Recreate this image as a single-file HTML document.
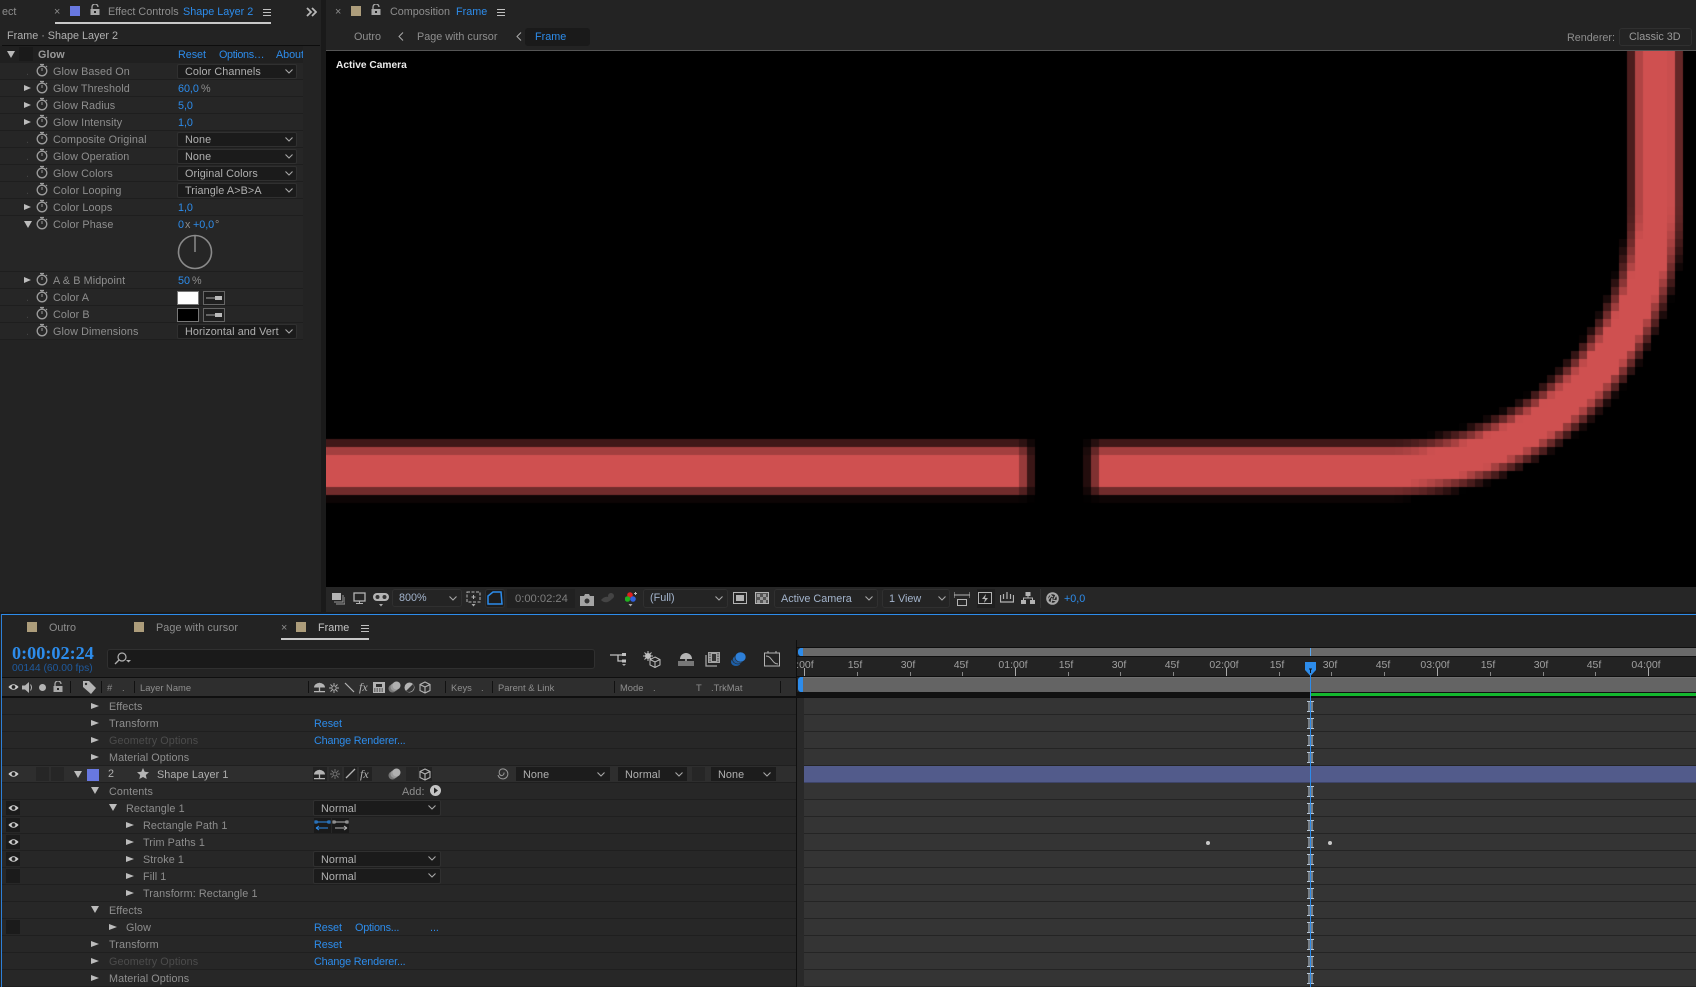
<!DOCTYPE html>
<html><head><meta charset="utf-8"><style>
html,body{margin:0;padding:0;background:#232323;width:1696px;height:987px;overflow:hidden}
body{position:relative;font:10.8px "Liberation Sans",sans-serif;color:#8e8e8e}
div,span,svg,canvas{position:absolute}
span{white-space:nowrap;line-height:16px}
.b{color:#2d8ceb}.l{color:#b0b0b0}.d{color:#4c4c4c}
.r{left:0;height:16px;background:#262626;border-bottom:1px solid #1e1e1e}
.r span{line-height:18px;top:0;letter-spacing:.1px}
.r span.b,.lr span.b{letter-spacing:-.05px}
.k{background:#1b1b1b;border:1px solid #303030;border-radius:2px;box-sizing:border-box}
.tr{width:0;height:0;border-left:8px solid #bcbcbc;border-top:3px solid transparent;border-bottom:3px solid transparent}
.r .tr{border-left-width:7px;top:5px!important}
.td{width:0;height:0;border-top:7px solid #bcbcbc;border-left:4px solid transparent;border-right:4px solid transparent}
.sw{background:#ad9d7b;width:10px;height:10px}
.hb{width:8px;height:1px;background:#c0c0c0;box-shadow:0 3px 0 #c0c0c0,0 6px 0 #c0c0c0}
.chev{width:8px;height:5px}
.sep{width:1px;height:12px;top:681px;background:#111}
.tk{width:1px;height:4px;top:672px;background:#888}
.tm{width:1px;height:8px;top:668px;background:#aaa}
.rl{top:658px;color:#a0a0a0;font-size:10.5px;line-height:14px;transform:translateX(-50%);margin-left:-2px}
.h{top:681px;font-size:9.4px;line-height:14px}
.lr{left:2px;width:794px;height:16px;background:#272727;border-bottom:1px solid #1f1f1f}
.lr>span{line-height:18px;top:0;letter-spacing:.1px}
.lr .tr{top:5px!important}
.tr2{left:804px;width:892px;height:16px;background:#343434;border-bottom:1px solid #242424}
.ib{left:1307px;width:7px;height:11px}
.ey{left:4px;width:14px;height:14px;top:1px;background:#1b1b1b}
.dt{color:#444;left:26px}
</style></head><body>
<svg width="0" height="0" style="left:0;top:0"><defs>
<symbol id="sw" viewBox="0 0 12 14"><circle cx="6" cy="8" r="4.8" fill="none" stroke="#9c9c9c" stroke-width="1.3"/><path d="M4 1.500h4M6 1.500v2M10 3l1 1" stroke="#9c9c9c" stroke-width="1.200"/><path d="M6 8V5" stroke="#9c9c9c"/></symbol>
<symbol id="ch" viewBox="0 0 8 5"><path d="M.5.5L4 4 7.500.5" fill="none" stroke="#a8a8a8" stroke-width="1.100"/></symbol>
<symbol id="ey" viewBox="0 0 14 10"><path d="M.5 5Q7-2 13.500 5Q7 12 .5 5Z" fill="#cfcfcf"/><circle cx="7" cy="5" r="2.400" fill="#222"/></symbol>
<symbol id="lk" viewBox="0 0 10 11"><path d="M2 5V3a3 3 0 0 1 6 0" fill="none" stroke="#a8a8a8" stroke-width="1.300"/><rect x="0.5" y="5" width="9" height="6" fill="#a8a8a8"/><rect x="4" y="7" width="2" height="2" fill="#232323"/></symbol>
<symbol id="ib" viewBox="0 0 7 11"><path d="M0 .5h7M0 10.500h7M2 1v9M5 1v9" fill="none" stroke="#b9c8d8" stroke-width="1"/></symbol>
<symbol id="um" viewBox="0 0 14 12"><path d="M1 6a6 5 0 0 1 12 0z" fill="#b4b4b4"/><path d="M7 1v9M1 10.500h12" stroke="#b4b4b4" stroke-width="1.400"/></symbol>
<symbol id="cb" viewBox="0 0 12 13"><path d="M6 1l5 2.500v6L6 12 1 9.500v-6zM1 3.500L6 6l5-2.500M6 6v6" fill="none" stroke="#b4b4b4" stroke-width="1.100"/></symbol>
</defs></svg>

<!-- Left panel -->
<div style="left:321px;top:0;width:5px;height:614px;background:#1a1a1a"></div>
<span style="left:2px;top:4px">ect</span>
<span style="left:54px;top:4px">×</span>
<div style="left:70px;top:6px;width:10px;height:10px;background:#6878e0"></div>
<svg width="10" height="11" style="left:90px;top:4px"><use href="#lk"/></svg>
<span style="left:108px;top:4px">Effect Controls</span><span class="b" style="left:183px;top:4px">Shape Layer 2</span>
<div class="hb" style="left:263px;top:9px"></div>
<div style="left:55px;top:22px;width:216px;height:2px;background:#c8c8c8"></div>
<svg width="11" height="10" style="left:306px;top:7px"><path d="M1 1l4 4-4 4M6 1l4 4-4 4" fill="none" stroke="#b8b8b8" stroke-width="1.800"/></svg>
<span class="l" style="left:7px;top:28px">Frame · Shape Layer 2</span>
<div style="left:2px;top:45px;width:318px;height:1px;background:#0d0d0d"></div>

<div class="r" style="top:46px;width:303px;background:#202020;border:0;height:17px">
<div class="td" style="left:7px;top:5px;border-top-color:#b8b8b8"></div>
<div style="left:19px;top:1px;width:14px;height:14px;background:#1a1a1a"></div>
<span class="l" style="left:38px;font-weight:bold;color:#9a9a9a">Glow</span>
<span class="b" style="left:178px">Reset</span><span class="b" style="left:219px;letter-spacing:-.35px">Options…</span><span class="b" style="left:276px;width:27px;overflow:hidden">About</span></div>

<div class="r" style="top:63px;width:303px"><span class="dt">.</span><svg width="12" height="14" style="left:36px;top:0"><use href="#sw"/></svg><span style="left:53px">Glow Based On</span><div class="k" style="left:177px;top:1px;width:120px;height:15px"></div><span class="l" style="left:185px">Color Channels</span><svg class="chev" style="left:285px;top:6px"><use href="#ch"/></svg></div>
<div class="r" style="top:80px;width:303px"><div class="tr" style="left:24px;top:4px"></div><svg width="12" height="14" style="left:36px;top:0"><use href="#sw"/></svg><span style="left:53px">Glow Threshold</span><span class="b" style="left:178px">60,0</span><span style="left:201px"> %</span></div>
<div class="r" style="top:97px;width:303px"><div class="tr" style="left:24px;top:4px"></div><svg width="12" height="14" style="left:36px;top:0"><use href="#sw"/></svg><span style="left:53px">Glow Radius</span><span class="b" style="left:178px">5,0</span></div>
<div class="r" style="top:114px;width:303px"><div class="tr" style="left:24px;top:4px"></div><svg width="12" height="14" style="left:36px;top:0"><use href="#sw"/></svg><span style="left:53px">Glow Intensity</span><span class="b" style="left:178px">1,0</span></div>
<div class="r" style="top:131px;width:303px"><span class="dt">.</span><svg width="12" height="14" style="left:36px;top:0"><use href="#sw"/></svg><span style="left:53px">Composite Original</span><div class="k" style="left:177px;top:1px;width:120px;height:15px"></div><span class="l" style="left:185px">None</span><svg class="chev" style="left:285px;top:6px"><use href="#ch"/></svg></div>
<div class="r" style="top:148px;width:303px"><span class="dt">.</span><svg width="12" height="14" style="left:36px;top:0"><use href="#sw"/></svg><span style="left:53px">Glow Operation</span><div class="k" style="left:177px;top:1px;width:120px;height:15px"></div><span class="l" style="left:185px">None</span><svg class="chev" style="left:285px;top:6px"><use href="#ch"/></svg></div>
<div class="r" style="top:165px;width:303px"><span class="dt">.</span><svg width="12" height="14" style="left:36px;top:0"><use href="#sw"/></svg><span style="left:53px">Glow Colors</span><div class="k" style="left:177px;top:1px;width:120px;height:15px"></div><span class="l" style="left:185px">Original Colors</span><svg class="chev" style="left:285px;top:6px"><use href="#ch"/></svg></div>
<div class="r" style="top:182px;width:303px"><span class="dt">.</span><svg width="12" height="14" style="left:36px;top:0"><use href="#sw"/></svg><span style="left:53px">Color Looping</span><div class="k" style="left:177px;top:1px;width:120px;height:15px"></div><span class="l" style="left:185px">Triangle A&gt;B&gt;A</span><svg class="chev" style="left:285px;top:6px"><use href="#ch"/></svg></div>
<div class="r" style="top:199px;width:303px"><div class="tr" style="left:24px;top:4px"></div><svg width="12" height="14" style="left:36px;top:0"><use href="#sw"/></svg><span style="left:53px">Color Loops</span><span class="b" style="left:178px">1,0</span></div>
<div class="r" style="top:216px;width:303px;height:55px"><div class="td" style="left:24px;top:5px"></div><svg width="12" height="14" style="left:36px;top:0"><use href="#sw"/></svg><span style="left:53px">Color Phase</span><span class="b" style="left:178px">0</span><span style="left:185px">x</span><span class="b" style="left:193px">+0,0</span><span style="left:215px">°</span>
<svg width="38" height="38" style="left:176px;top:17px"><circle cx="19" cy="19" r="16.500" fill="none" stroke="#8a8a8a" stroke-width="1.600"/><path d="M19 3v16" stroke="#8a8a8a" stroke-width="1.500"/></svg></div>
<div class="r" style="top:272px;width:303px"><div class="tr" style="left:24px;top:4px"></div><svg width="12" height="14" style="left:36px;top:0"><use href="#sw"/></svg><span style="left:53px">A &amp; B Midpoint</span><span class="b" style="left:178px">50</span><span style="left:192px">%</span></div>
<div class="r" style="top:289px;width:303px"><span class="dt">.</span><svg width="12" height="14" style="left:36px;top:0"><use href="#sw"/></svg><span style="left:53px">Color A</span><div style="left:177px;top:2px;width:22px;height:14px;box-sizing:border-box;border:1px solid #777;background:#fff"></div><svg width="22" height="14" style="left:203px;top:2px"><rect x=".5" y=".5" width="21" height="13" fill="#1f1f1f" stroke="#666"/><path d="M3 7h9" stroke="#aaa"/><path d="M12 5h7v4h-7z" fill="#bbb"/></svg></div>
<div class="r" style="top:306px;width:303px"><span class="dt">.</span><svg width="12" height="14" style="left:36px;top:0"><use href="#sw"/></svg><span style="left:53px">Color B</span><div style="left:177px;top:2px;width:22px;height:14px;box-sizing:border-box;border:1px solid #777;background:#000"></div><svg width="22" height="14" style="left:203px;top:2px"><rect x=".5" y=".5" width="21" height="13" fill="#1f1f1f" stroke="#666"/><path d="M3 7h9" stroke="#aaa"/><path d="M12 5h7v4h-7z" fill="#bbb"/></svg></div>
<div class="r" style="top:323px;width:303px"><span class="dt">.</span><svg width="12" height="14" style="left:36px;top:0"><use href="#sw"/></svg><span style="left:53px">Glow Dimensions</span><div class="k" style="left:177px;top:1px;width:120px;height:15px"></div><span class="l" style="left:185px">Horizontal and Vert</span><svg class="chev" style="left:285px;top:6px"><use href="#ch"/></svg></div>

<!-- Composition panel -->
<span style="left:335px;top:4px">×</span>
<div class="sw" style="left:351px;top:6px"></div>
<svg width="10" height="11" style="left:371px;top:4px"><use href="#lk"/></svg>
<span style="left:390px;top:4px">Composition</span><span class="b" style="left:456px;top:4px">Frame</span>
<div class="hb" style="left:497px;top:9px"></div>
<span style="left:354px;top:29px">Outro</span>
<svg width="6" height="9" style="left:398px;top:32px"><path d="M5 .5L1 4.500 5 8.500" fill="none" stroke="#aaa"/></svg>
<span style="left:417px;top:29px">Page with cursor</span>
<svg width="6" height="9" style="left:516px;top:32px"><path d="M5 .5L1 4.500 5 8.500" fill="none" stroke="#aaa"/></svg>
<div style="left:525px;top:28px;width:65px;height:18px;background:#1a1a1a;border-radius:3px"></div>
<span class="b" style="left:535px;top:29px">Frame</span>
<span style="left:1567px;top:30px">Renderer:</span>
<div class="k" style="left:1619px;top:28px;width:73px;height:18px;background:#242424;border-radius:3px"></div>
<span style="left:1629px;top:29px;color:#9a9a9a">Classic 3D</span>
<div style="left:326px;top:50px;width:1370px;height:1px;background:#555"></div>

<div style="left:326px;top:51px;width:1370px;height:536px;background:#000;overflow:hidden">
<svg width="1370" height="536" style="left:0;top:0"><path d="M0 418H693M791 418H1065A265 265 0 0 0 1330 153V0" fill="none" stroke="#6a2a2a" stroke-width="52"/><path d="M0 418H693M791 418H1065A265 265 0 0 0 1330 153V0" fill="none" stroke="#cf5050" stroke-width="30"/></svg>
<canvas id="v" width="1370" height="536" style="left:0;top:0"></canvas>
</div>
<script>
(function(){var c=document.getElementById('v').getContext('2d'),C=function(v){return v<0?0:v>1?1:v};
c.fillStyle='#000';c.fillRect(0,0,1370,536);
for(var ay=47;ay<587;ay+=8)for(var ax=323;ax<1696;ax+=8){var x=ax+4,y=ay+4,d;
if(x<=1391)d=Math.abs(y-469);else if(y<=204)d=Math.abs(x-1656);else d=Math.abs(Math.hypot(x-1391,y-204)-265);
var I=C((31-d)/16.5);if(I<=0)continue;
if(x<1060){if(x>1003)I*=C((33-(x-1003))/18)}else if(x<1117){I*=C((33-(1117-x))/18)}
if(I<=0)continue;
c.fillStyle='rgb('+Math.round(I*207)+','+Math.round(I*80)+','+Math.round(I*80)+')';c.fillRect(ax-326,ay-51,8,8)}})();
</script>
<span style="left:336px;top:58px;color:#ececec;font-weight:bold;font-size:10.2px">Active Camera</span>

<!-- Viewer toolbar -->
<div style="left:326px;top:587px;width:1370px;height:25px;background:#262626"></div>
<div style="left:0;top:612px;width:1696px;height:2px;background:#1a1a1a"></div>
<svg width="14" height="13" style="left:331px;top:592px"><rect x="1" y="1" width="9" height="7" fill="#b4b4b4"/><path d="M12 3v7H3M14 5v7H5" fill="none" stroke="#9a9a9a"/></svg>
<svg width="13" height="13" style="left:353px;top:592px"><rect x="1" y="1" width="11" height="8" fill="none" stroke="#b4b4b4" stroke-width="1.300"/><path d="M3 11.500h7M6.500 9v2" stroke="#b4b4b4"/></svg>
<svg width="16" height="15" style="left:373px;top:592px"><rect x="0" y="1" width="16" height="8" rx="4" fill="#b4b4b4"/><circle cx="4.500" cy="5" r="2" fill="#333"/><circle cx="11.500" cy="5" r="2" fill="#333"/><path d="M6 12h4l-2 2.500z" fill="#aaa"/></svg>
<div class="k" style="left:392px;top:589px;width:70px;height:18px;background:#242424;border-radius:3px"></div>
<span style="left:399px;top:590px;color:#a3b4cc">800%</span>
<svg class="chev" style="left:449px;top:596px"><use href="#ch"/></svg>
<svg width="15" height="16" style="left:466px;top:591px"><path d="M1 1h13v10H1z" fill="none" stroke="#b4b4b4" stroke-dasharray="3 1.500"/><path d="M7.500 4v4M5.500 6h4" stroke="#b4b4b4"/><path d="M5.500 13h4l-2 2.500z" fill="#aaa"/></svg>
<div class="k" style="left:485px;top:589px;width:20px;height:19px;background:#1d1d1d;border-radius:3px"></div>
<svg width="16" height="14" style="left:487px;top:591px"><path d="M1 13V5l5-4h8l1 12z" fill="none" stroke="#2d8ceb" stroke-width="1.500"/></svg>
<div style="left:507px;top:589px;width:68px;height:19px;background:#212121"></div>
<span style="left:515px;top:591px;color:#7e7e7e;font-size:11.200px">0:00:02:24</span>
<svg width="14" height="12" style="left:580px;top:594px"><path d="M0 2h4l1-2h4l1 2h4v10H0z" fill="#a4a4a4"/><circle cx="7" cy="7" r="2.500" fill="#333"/></svg>
<svg width="14" height="13" style="left:601px;top:592px"><path d="M0 8Q5 2 11 7Q5 13 0 8Z" fill="#444"/><circle cx="10" cy="4" r="3" fill="#444"/></svg>
<svg width="12" height="16" style="left:625px;top:591px"><circle cx="5" cy="4" r="2.800" fill="#e02020"/><circle cx="2.500" cy="8" r="2.800" fill="#20b020"/><circle cx="8" cy="8" r="2.800" fill="#3060e0"/><path d="M9 2.500h3M10.500 1v3" stroke="#bbb"/><path d="M3.500 13h4l-2 2.500z" fill="#aaa"/></svg>
<div class="k" style="left:643px;top:589px;width:85px;height:19px;background:#242424;border-radius:3px"></div>
<span style="left:650px;top:590px;color:#a3b4cc">(Full)</span>
<svg class="chev" style="left:715px;top:596px"><use href="#ch"/></svg>
<svg width="14" height="12" style="left:733px;top:592px"><rect x=".5" y=".5" width="13" height="11" fill="none" stroke="#b4b4b4"/><rect x="3" y="3" width="8" height="6" fill="#b4b4b4"/></svg>
<svg width="14" height="12" style="left:755px;top:592px"><rect x=".5" y=".5" width="13" height="11" fill="#555" stroke="#b4b4b4"/><path d="M2 2h3v3H2zM8 2h3v3H8zM5 5h3v3H5zM11 5h2v3h-2zM2 8h3v3H2zM8 8h3v3H8z" fill="#999"/></svg>
<div class="k" style="left:774px;top:589px;width:104px;height:19px;background:#242424;border-radius:3px"></div>
<span style="left:781px;top:591px;color:#a3b4cc">Active Camera</span>
<svg class="chev" style="left:865px;top:596px"><use href="#ch"/></svg>
<div class="k" style="left:882px;top:589px;width:68px;height:19px;background:#242424;border-radius:3px"></div>
<span style="left:889px;top:591px;color:#a3b4cc">1 View</span>
<svg class="chev" style="left:938px;top:596px"><use href="#ch"/></svg>
<svg width="16" height="14" style="left:954px;top:592px"><path d="M0 3h16M0 0v6M16 0v6" stroke="#b4b4b4"/><rect x="3.500" y="7.500" width="9" height="6" fill="none" stroke="#b4b4b4"/></svg>
<div style="left:977px;top:589px;width:18px;height:19px;background:#1f1f1f"></div>
<svg width="15" height="13" style="left:978px;top:592px"><rect x=".5" y=".5" width="13" height="11" fill="none" stroke="#b4b4b4"/><path d="M8 2L4 7h3l-1 4 4-5H7z" fill="#b4b4b4"/></svg>
<svg width="14" height="12" style="left:1000px;top:592px"><path d="M.5 3v7h13V3M3.500 2v5M7 0v7M10.500 2v5" fill="none" stroke="#b4b4b4" stroke-width="1.200"/></svg>
<svg width="14" height="12" style="left:1021px;top:592px"><rect x="4.500" y="0" width="5" height="4" fill="#b4b4b4"/><rect x="0" y="8" width="5" height="4" fill="#b4b4b4"/><rect x="9" y="8" width="5" height="4" fill="#b4b4b4"/><path d="M7 4v2M2.500 8V6h9v2" fill="none" stroke="#b4b4b4"/></svg>
<div style="left:1040px;top:589px;width:1px;height:19px;background:#333"></div>
<svg width="13" height="13" style="left:1046px;top:592px"><circle cx="6.500" cy="6.500" r="5.300" fill="none" stroke="#a8a8a8" stroke-width="2"/><path d="M3 2l4 3M10 3L8 7M11 9L6 8M5 11l1-5M2 8l3-4" stroke="#a8a8a8" stroke-width="1.200"/></svg>
<span class="b" style="left:1064px;top:591px">+0,0</span>

<!-- Timeline panel -->
<div style="left:1px;top:614px;width:1695px;height:1px;background:#2d8ceb"></div>
<div style="left:1px;top:614px;width:1px;height:373px;background:#2d80d8"></div>
<div class="sw" style="left:27px;top:622px"></div><span style="left:49px;top:620px">Outro</span>
<div class="sw" style="left:134px;top:622px"></div><span style="left:156px;top:620px;letter-spacing:.1px">Page with cursor</span>
<span style="left:281px;top:620px">×</span>
<div class="sw" style="left:296px;top:622px"></div><span style="left:318px;top:620px;color:#c4c4c4">Frame</span>
<div class="hb" style="left:361px;top:625px"></div>
<div style="left:281px;top:638px;width:88px;height:2px;background:#c8c8c8"></div>
<span class="b" style="left:12px;top:645px;font:bold 18.2px/16px 'Liberation Serif',serif">0:00:02:24</span>
<span style="left:12px;top:661px;color:#1f5a9e;font-size:10.300px">00144 (60.00 fps)</span>
<div class="k" style="left:107px;top:649px;width:488px;height:20px;background:#1a1a1a;border-radius:3px"></div>
<svg width="18" height="14" style="left:113px;top:652px"><circle cx="9" cy="5" r="4" fill="none" stroke="#b0b0b0" stroke-width="1.200"/><path d="M6 8l-4 4" stroke="#b0b0b0" stroke-width="1.300"/><path d="M13 8h5l-2.500 2.500z" fill="#b0b0b0"/></svg>
<svg width="18" height="15" style="left:610px;top:652px"><path d="M0 3h8M8 3h5M8 3v6h5" fill="none" stroke="#c0c0c0" stroke-width="1.300"/><rect x="12" y="1" width="4" height="3" fill="#c0c0c0"/><rect x="12" y="7.500" width="4" height="3" fill="#c0c0c0"/><path d="M12 12h4l-2 2z" fill="#aaa"/></svg>
<svg width="18" height="17" style="left:643px;top:651px"><circle cx="5" cy="5" r="3" fill="#c0c0c0"/><path d="M5 0v10M0 5h10M1.500 1.500l7 7M8.500 1.500l-7 7" stroke="#c0c0c0"/><path d="M12 6l5 2.500v5.500l-5 2.500-5-2.500V8.500zM7 8.500l5 2.500 5-2.500M12 11v5.500" fill="#232323" stroke="#c0c0c0"/></svg>
<svg width="16" height="14" style="left:678px;top:652px"><path d="M2 7a6 6 0 0 1 12 0z" fill="#b4b4b4"/><path d="M8 1v8" stroke="#b4b4b4" stroke-width="1.500"/><rect x="0" y="9" width="16" height="5" fill="#777"/></svg>
<svg width="15" height="15" style="left:705px;top:652px"><rect x="3" y="0" width="12" height="11" fill="#a4a4a4"/><path d="M5 1v9M13 1v9" stroke="#333" stroke-dasharray="1.500 1"/><rect x="7" y="2" width="4" height="7" fill="#333"/><path d="M1 3v11h11" fill="none" stroke="#a4a4a4" stroke-width="1.300"/></svg>
<svg width="15" height="14" style="left:731px;top:652px"><ellipse cx="5" cy="10" rx="5" ry="4" fill="#1c5fa8"/><ellipse cx="7" cy="7.500" rx="5.500" ry="4.500" fill="#235ea0" stroke="#232323" stroke-width=".6"/><ellipse cx="9.500" cy="5" rx="5.500" ry="5" fill="#2d7fd8" stroke="#232323" stroke-width=".6"/></svg>
<svg width="16" height="16" style="left:764px;top:651px"><rect x=".5" y="2" width="15" height="13" fill="none" stroke="#b4b4b4"/><path d="M2 5c6 0 6 8 12 8M4 0v2M12 0v2" fill="none" stroke="#b4b4b4"/></svg>

<!-- column header -->
<div style="left:2px;top:677px;width:794px;height:1px;background:#0f0f0f"></div>
<div style="left:2px;top:678px;width:794px;height:18px;background:#2e2e2e"></div>
<div style="left:2px;top:696px;width:794px;height:2px;background:#0f0f0f"></div>
<svg width="11" height="8" style="left:8px;top:683px"><use href="#ey"/></svg>
<svg width="11" height="11" style="left:22px;top:682px"><path d="M0 3.500h3L7 0v11L3 7.500H0z" fill="#b4b4b4"/><path d="M8.500 2.500q2 3 0 6" fill="none" stroke="#b4b4b4"/></svg>
<div style="left:39px;top:684px;width:7px;height:7px;border-radius:50%;background:#b4b4b4"></div>
<svg width="10" height="11" style="left:53px;top:681px"><use href="#lk"/></svg>
<div class="sep" style="left:70px"></div>
<svg width="13" height="13" style="left:83px;top:681px"><path d="M0 0h6l7 7-5 6-8-7z" fill="#b4b4b4"/><circle cx="3" cy="3" r="1.200" fill="#2e2e2e"/></svg>
<div class="sep" style="left:101px"></div>
<span class="h" style="left:107px">#</span><span class="h" style="left:122px">.</span>
<div class="sep" style="left:134px"></div>
<span class="h" style="left:140px">Layer Name</span>
<div class="sep" style="left:308px"></div>
<svg width="13" height="11" style="left:313px;top:682px"><use href="#um"/></svg>
<svg width="10" height="10" style="left:329px;top:683px"><circle cx="5" cy="5" r="2.200" fill="none" stroke="#b4b4b4"/><path d="M5 0v2M5 8v2M0 5h2M8 5h2M1.500 1.500L3 3M7 7l1.500 1.500M8.500 1.500L7 3M3 7L1.500 8.500" stroke="#b4b4b4" stroke-width=".9"/></svg>
<svg width="11" height="11" style="left:344px;top:682px"><path d="M1 1l9 9" stroke="#b4b4b4" stroke-width="1.200"/></svg>
<span style="left:359px;top:680px;font:italic 12px/14px 'Liberation Serif',serif;color:#b4b4b4">fx</span>
<svg width="13" height="11" style="left:373px;top:682px"><rect width="12" height="11" fill="#b4b4b4"/><rect x="3" y="2" width="6" height="3" fill="#2e2e2e"/><path d="M1 7h10M1 9h10" stroke="#2e2e2e" stroke-dasharray="1.500 1"/></svg>
<svg width="13" height="12" style="left:388px;top:681px"><circle cx="4.500" cy="7.500" r="4" fill="#777"/><circle cx="6.500" cy="6" r="4" fill="#999"/><circle cx="8.500" cy="4.500" r="4" fill="#b0b0b0"/></svg>
<svg width="11" height="11" style="left:404px;top:682px"><circle cx="5.500" cy="5.500" r="5" fill="#b4b4b4"/><path d="M9 2A5 5 0 0 1 2 9z" fill="#333"/></svg>
<svg width="12" height="13" style="left:419px;top:681px"><use href="#cb"/></svg>
<div class="sep" style="left:445px"></div>
<span class="h" style="left:451px">Keys</span><span class="h" style="left:481px">.</span>
<div class="sep" style="left:492px"></div>
<span class="h" style="left:498px">Parent &amp; Link</span>
<div class="sep" style="left:614px"></div>
<span class="h" style="left:620px">Mode</span><span class="h" style="left:653px">.</span>
<span class="h" style="left:696px">T</span><span class="h" style="left:711px">.TrkMat</span>
<div class="sep" style="left:780px"></div>

<!-- layer list -->
<div class="lr" style="top:698px"><div class="tr" style="left:89px;top:4px"></div><span style="left:107px">Effects</span></div>
<div class="lr" style="top:715px"><div class="tr" style="left:89px;top:4px"></div><span style="left:107px">Transform</span><span class="b" style="left:312px">Reset</span></div>
<div class="lr" style="top:732px"><div class="tr" style="left:89px;top:4px"></div><span class="d" style="left:107px">Geometry Options</span><span class="b" style="left:312px;letter-spacing:-.15px">Change Renderer...</span></div>
<div class="lr" style="top:749px"><div class="tr" style="left:89px;top:4px"></div><span style="left:107px">Material Options</span></div>
<div class="lr" style="top:766px;background:#2e2e2e">
<div class="ey" style="background:none"></div><svg width="11" height="8" style="left:6px;top:4px"><use href="#ey"/></svg>
<div style="left:34px;top:1px;width:13px;height:14px;background:#262626"></div><div style="left:49px;top:1px;width:13px;height:14px;background:#262626"></div>
<div class="td" style="left:72px;top:5px"></div>
<div style="left:85px;top:3px;width:12px;height:12px;background:#6878e0"></div>
<span class="l" style="left:106px;top:-1px">2</span>
<svg width="12" height="11" style="left:135px;top:2px"><path d="M6 0l1.700 3.800 4.300.4-3.200 2.800.9 4L6 9 2.300 11l.9-4L0 4.200l4.300-.4z" fill="#b4b4b4"/></svg>
<span class="l" style="left:155px">Shape Layer 1</span>
<div style="left:311px;top:1px;width:14px;height:14px;background:#222"></div><svg width="13" height="11" style="left:311px;top:3px"><use href="#um"/></svg>
<div style="left:327px;top:1px;width:13px;height:14px;background:#282828"></div><svg width="10" height="10" style="left:328px;top:3px"><circle cx="5" cy="5" r="2" fill="none" stroke="#777"/><path d="M5 0v2M5 8v2M0 5h2M8 5h2M1.500 1.500L3 3M7 7l1.500 1.500M8.500 1.500L7 3M3 7L1.500 8.500" stroke="#777" stroke-width=".9"/></svg>
<div style="left:342px;top:1px;width:13px;height:14px;background:#222"></div><svg width="11" height="11" style="left:343px;top:2px"><path d="M1 10l9-9" stroke="#b4b4b4" stroke-width="1.300"/></svg>
<div style="left:357px;top:1px;width:13px;height:14px;background:#222"></div><span style="left:358px;font:italic 12px/16px 'Liberation Serif',serif;color:#b4b4b4">fx</span>
<svg width="13" height="12" style="left:386px;top:2px"><circle cx="4.500" cy="7.500" r="4" fill="#777"/><circle cx="6.500" cy="6" r="4" fill="#999"/><circle cx="8.500" cy="4.500" r="4" fill="#b0b0b0"/></svg>
<div style="left:404px;top:1px;width:12px;height:14px;background:#262626"></div>
<div style="left:417px;top:1px;width:13px;height:14px;background:#222"></div><svg width="12" height="13" style="left:417px;top:2px"><use href="#cb"/></svg>
<svg width="12" height="12" style="left:495px;top:2px"><path d="M1 7a5 5 0 1 0 4-6 3.500 3.500 0 0 0-1 6.500 2.500 2.500 0 0 0 3-3" fill="none" stroke="#999"/></svg>
<div style="left:514px;top:1px;width:94px;height:14px;background:#1c1c1c"></div><span class="l" style="left:521px">None</span><svg class="chev" style="left:595px;top:6px"><use href="#ch"/></svg>
<div style="left:616px;top:1px;width:69px;height:14px;background:#1c1c1c"></div><span class="l" style="left:623px">Normal</span><svg class="chev" style="left:673px;top:6px"><use href="#ch"/></svg>
<div style="left:690px;top:1px;width:13px;height:14px;background:#262626"></div>
<div style="left:709px;top:1px;width:65px;height:14px;background:#1c1c1c"></div><span class="l" style="left:716px">None</span><svg class="chev" style="left:761px;top:6px"><use href="#ch"/></svg>
</div>
<div class="lr" style="top:783px"><div class="td" style="left:89px;top:4px"></div><span style="left:107px">Contents</span><span style="left:400px">Add:</span><svg width="11" height="11" style="left:428px;top:2px"><circle cx="5.500" cy="5.500" r="5.500" fill="#c4c4c4"/><path d="M4 2.500L8 5.500 4 8.500z" fill="#272727"/></svg></div>
<div class="lr" style="top:800px"><div class="ey"></div><svg width="11" height="8" style="left:6px;top:4px"><use href="#ey"/></svg><div class="td" style="left:107px;top:4px"></div><span style="left:124px">Rectangle 1</span><div class="k" style="left:311px;top:0;width:128px;height:16px"></div><span class="l" style="left:319px">Normal</span><svg class="chev" style="left:426px;top:5px"><use href="#ch"/></svg></div>
<div class="lr" style="top:817px"><div class="ey"></div><svg width="11" height="8" style="left:6px;top:4px"><use href="#ey"/></svg><div class="tr" style="left:124px;top:4px"></div><span style="left:141px">Rectangle Path 1</span>
<svg width="17" height="15" style="left:312px;top:1px"><rect width="17" height="15" fill="#1a1a1a"/><path d="M3 4h11M2 10h12M2 10l3-2M2 10l3 2" fill="none" stroke="#2d8ceb"/><rect x="1" y="3" width="2" height="2" fill="none" stroke="#2d8ceb"/><rect x="14" y="3" width="2" height="2" fill="none" stroke="#2d8ceb"/></svg>
<svg width="17" height="15" style="left:330px;top:1px"><rect width="17" height="15" fill="#1a1a1a"/><path d="M3 4h11M3 10h12M15 10l-3-2M15 10l-3 2" fill="none" stroke="#b4b4b4"/><rect x="1" y="3" width="2" height="2" fill="none" stroke="#b4b4b4"/><rect x="14" y="3" width="2" height="2" fill="none" stroke="#b4b4b4"/></svg></div>
<div class="lr" style="top:834px"><div class="ey"></div><svg width="11" height="8" style="left:6px;top:4px"><use href="#ey"/></svg><div class="tr" style="left:124px;top:4px"></div><span style="left:141px">Trim Paths 1</span></div>
<div class="lr" style="top:851px"><div class="ey"></div><svg width="11" height="8" style="left:6px;top:4px"><use href="#ey"/></svg><div class="tr" style="left:124px;top:4px"></div><span style="left:141px">Stroke 1</span><div class="k" style="left:311px;top:0;width:128px;height:16px"></div><span class="l" style="left:319px">Normal</span><svg class="chev" style="left:426px;top:5px"><use href="#ch"/></svg></div>
<div class="lr" style="top:868px"><div class="ey"></div><div class="tr" style="left:124px;top:4px"></div><span style="left:141px">Fill 1</span><div class="k" style="left:311px;top:0;width:128px;height:16px"></div><span class="l" style="left:319px">Normal</span><svg class="chev" style="left:426px;top:5px"><use href="#ch"/></svg></div>
<div class="lr" style="top:885px"><div class="tr" style="left:124px;top:4px"></div><span style="left:141px">Transform: Rectangle 1</span></div>
<div class="lr" style="top:902px"><div class="td" style="left:89px;top:4px"></div><span style="left:107px">Effects</span></div>
<div class="lr" style="top:919px"><div class="ey"></div><div class="tr" style="left:107px;top:4px"></div><span style="left:124px">Glow</span><span class="b" style="left:312px">Reset</span><span class="b" style="left:353px;letter-spacing:-.2px">Options...</span><span class="b" style="left:428px;top:0">...</span></div>
<div class="lr" style="top:936px"><div class="tr" style="left:89px;top:4px"></div><span style="left:107px">Transform</span><span class="b" style="left:312px">Reset</span></div>
<div class="lr" style="top:953px"><div class="tr" style="left:89px;top:4px"></div><span class="d" style="left:107px">Geometry Options</span><span class="b" style="left:312px;letter-spacing:-.15px">Change Renderer...</span></div>
<div class="lr" style="top:970px"><div class="tr" style="left:89px;top:4px"></div><span style="left:107px">Material Options</span></div>
<div style="left:796px;top:640px;width:1px;height:347px;background:#0f0f0f"></div>
<div style="left:797px;top:698px;width:7px;height:289px;background:#292929"></div>

<!-- Ruler -->
<div style="left:797px;top:647px;width:899px;height:1px;background:#0f0f0f"></div>
<div style="left:800px;top:648px;width:896px;height:8px;background:#6a6a6a"></div>
<div style="left:798px;top:648px;width:5px;height:8px;background:#2d8ceb;border-radius:3px 0 0 3px"></div>
<div style="left:797px;top:656px;width:899px;height:1px;background:#0f0f0f"></div>
<div style="left:797px;top:676px;width:899px;height:1px;background:#0f0f0f"></div>
<div style="left:800px;top:677px;width:896px;height:15px;background:#646464;border-top:1px solid #707070;box-sizing:border-box"></div>
<div style="left:798px;top:677px;width:5px;height:15px;background:#2d8ceb;border-radius:3px 0 0 3px"></div>
<div style="left:797px;top:692px;width:899px;height:5px;background:#111"></div>
<div style="left:1310px;top:693px;width:386px;height:3px;background:#14b82e"></div>
<div style="left:797px;top:697px;width:899px;height:1px;background:#0f0f0f"></div>
<div style="left:797px;top:650px;width:40px;height:24px;overflow:hidden"><span class="rl" style="left:7px;top:8px">0:00f</span></div>
<div class="tm" style="left:804px"></div>
<span class="rl" style="left:857px">15f</span><div class="tk" style="left:857px"></div>
<span class="rl" style="left:910px">30f</span><div class="tk" style="left:910px"></div>
<span class="rl" style="left:963px">45f</span><div class="tk" style="left:962px"></div>
<span class="rl" style="left:1015px">01:00f</span><div class="tm" style="left:1015px"></div>
<span class="rl" style="left:1068px">15f</span><div class="tk" style="left:1068px"></div>
<span class="rl" style="left:1121px">30f</span><div class="tk" style="left:1120px"></div>
<span class="rl" style="left:1174px">45f</span><div class="tk" style="left:1173px"></div>
<span class="rl" style="left:1226px">02:00f</span><div class="tm" style="left:1226px"></div>
<span class="rl" style="left:1279px">15f</span><div class="tk" style="left:1279px"></div>
<span class="rl" style="left:1332px">30f</span><div class="tk" style="left:1331px"></div>
<span class="rl" style="left:1385px">45f</span><div class="tk" style="left:1384px"></div>
<span class="rl" style="left:1437px">03:00f</span><div class="tm" style="left:1437px"></div>
<span class="rl" style="left:1490px">15f</span><div class="tk" style="left:1490px"></div>
<span class="rl" style="left:1543px">30f</span><div class="tk" style="left:1543px"></div>
<span class="rl" style="left:1596px">45f</span><div class="tk" style="left:1595px"></div>
<span class="rl" style="left:1648px">04:00f</span><div class="tm" style="left:1648px"></div>

<!-- Tracks -->
<div class="tr2" style="top:698px"></div><div class="tr2" style="top:715px"></div><div class="tr2" style="top:732px"></div><div class="tr2" style="top:749px"></div>
<div class="tr2" style="top:766px;background:#525b8b;border-bottom:1px solid #3e4468"></div>
<div class="tr2" style="top:783px"></div><div class="tr2" style="top:800px"></div><div class="tr2" style="top:817px"></div><div class="tr2" style="top:834px"></div><div class="tr2" style="top:851px"></div><div class="tr2" style="top:868px"></div><div class="tr2" style="top:885px"></div><div class="tr2" style="top:902px"></div><div class="tr2" style="top:919px"></div><div class="tr2" style="top:936px"></div><div class="tr2" style="top:953px"></div><div class="tr2" style="top:970px"></div>
<svg width="7" height="11" class="ib" style="top:701px"><use href="#ib"/></svg>
<svg width="7" height="11" class="ib" style="top:718px"><use href="#ib"/></svg>
<svg width="7" height="11" class="ib" style="top:735px"><use href="#ib"/></svg>
<svg width="7" height="11" class="ib" style="top:752px"><use href="#ib"/></svg>
<svg width="7" height="11" class="ib" style="top:786px"><use href="#ib"/></svg>
<svg width="7" height="11" class="ib" style="top:803px"><use href="#ib"/></svg>
<svg width="7" height="11" class="ib" style="top:820px"><use href="#ib"/></svg>
<svg width="7" height="11" class="ib" style="top:837px"><use href="#ib"/></svg>
<svg width="7" height="11" class="ib" style="top:854px"><use href="#ib"/></svg>
<svg width="7" height="11" class="ib" style="top:871px"><use href="#ib"/></svg>
<svg width="7" height="11" class="ib" style="top:888px"><use href="#ib"/></svg>
<svg width="7" height="11" class="ib" style="top:905px"><use href="#ib"/></svg>
<svg width="7" height="11" class="ib" style="top:922px"><use href="#ib"/></svg>
<svg width="7" height="11" class="ib" style="top:939px"><use href="#ib"/></svg>
<svg width="7" height="11" class="ib" style="top:956px"><use href="#ib"/></svg>
<svg width="7" height="11" class="ib" style="top:973px"><use href="#ib"/></svg>
<div style="left:1310px;top:648px;width:1px;height:8px;background:#5aa8f0"></div>
<div style="left:1310px;top:672px;width:1px;height:315px;background:#2d8ceb"></div>
<svg width="11" height="14" style="left:1305px;top:662px"><path d="M0 0h11v8l-5.500 6L0 8z" fill="#2d8ceb"/><path d="M4 7h3M5.500 7v4" stroke="#111"/></svg>
<div style="left:1206px;top:841px;width:4px;height:4px;border-radius:50%;background:#c8c8c8"></div>
<div style="left:1328px;top:841px;width:4px;height:4px;border-radius:50%;background:#c8c8c8"></div>
</body></html>
